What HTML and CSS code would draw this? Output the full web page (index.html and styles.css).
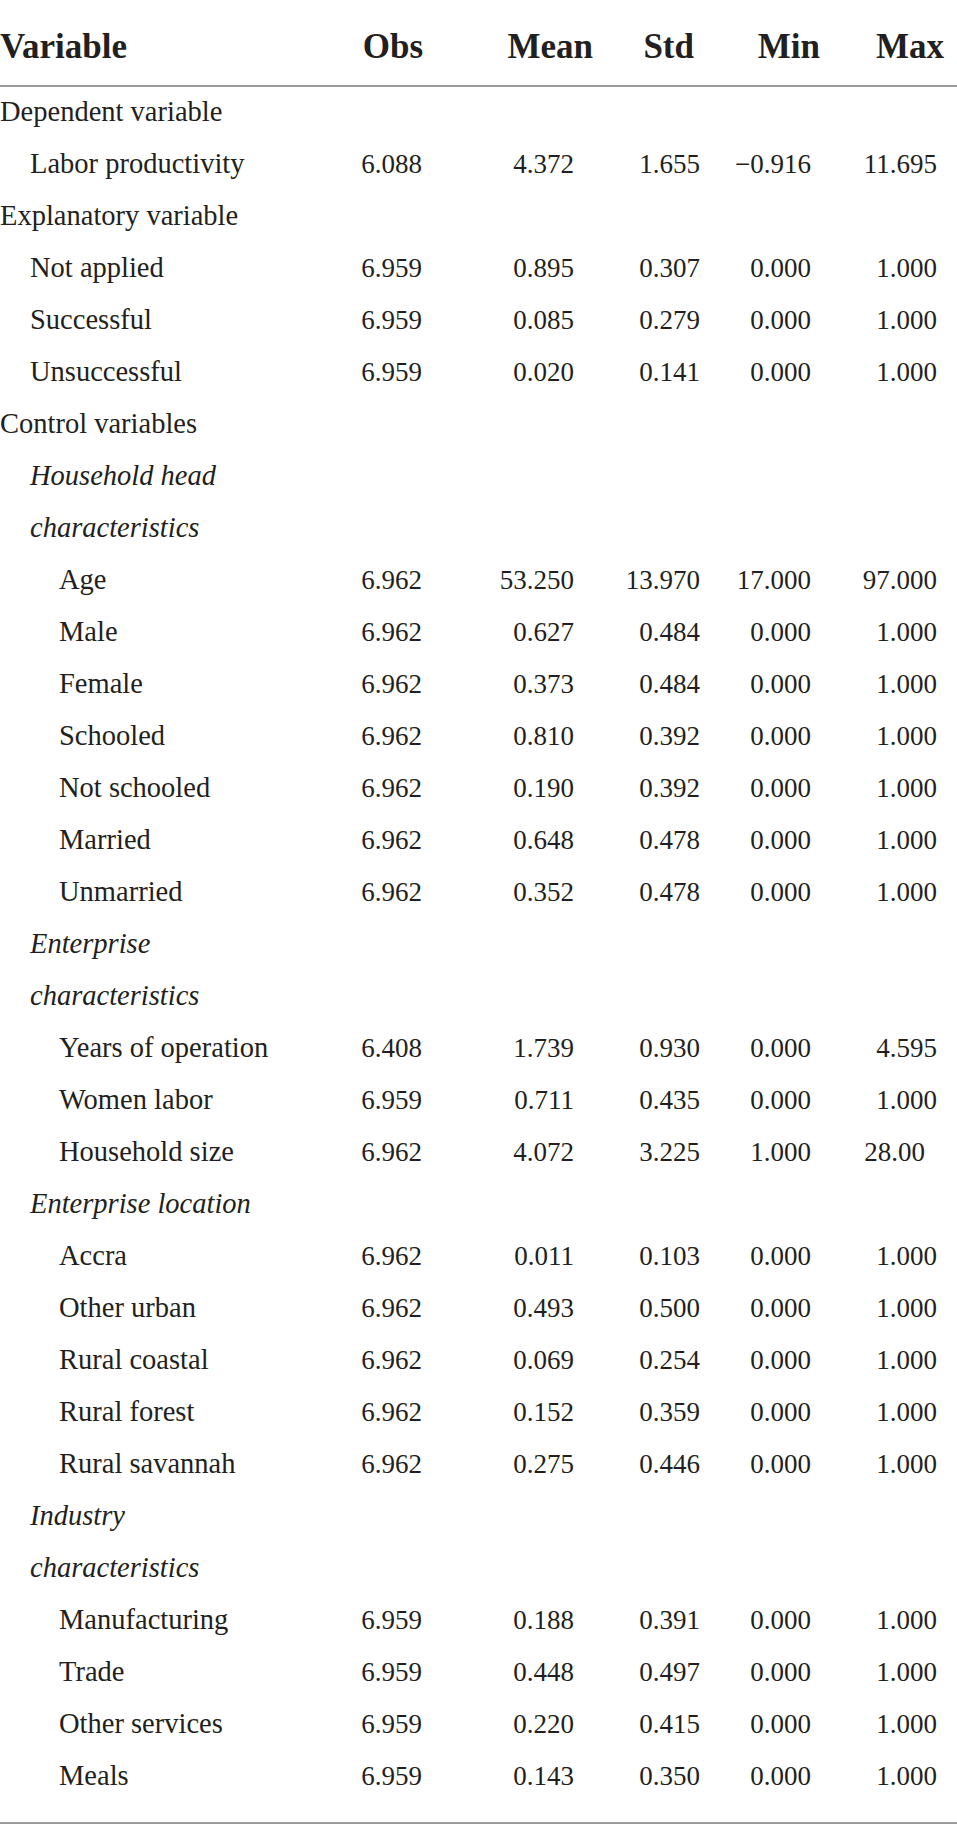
FILE: index.html
```html
<!DOCTYPE html>
<html lang="en">
<head>
<meta charset="utf-8">
<title>Descriptive statistics</title>
<link rel="stylesheet" href="styles.css">
</head>
<body>
<div class="table">
  <div class="row head">
    <div class="label">Variable</div>
    <div class="c obs">Obs</div>
    <div class="c mean">Mean</div>
    <div class="c std">Std</div>
    <div class="c min">Min</div>
    <div class="c max">Max</div>
  </div>
  <div class="body">
    <div class="row"><div class="label">Dependent variable</div></div>
    <div class="row"><div class="label l1">Labor productivity</div><div class="c obs">6.088</div><div class="c mean">4.372</div><div class="c std">1.655</div><div class="c min">&minus;0.916</div><div class="c max">11.695</div></div>
    <div class="row"><div class="label">Explanatory variable</div></div>
    <div class="row"><div class="label l1">Not applied</div><div class="c obs">6.959</div><div class="c mean">0.895</div><div class="c std">0.307</div><div class="c min">0.000</div><div class="c max">1.000</div></div>
    <div class="row"><div class="label l1">Successful</div><div class="c obs">6.959</div><div class="c mean">0.085</div><div class="c std">0.279</div><div class="c min">0.000</div><div class="c max">1.000</div></div>
    <div class="row"><div class="label l1">Unsuccessful</div><div class="c obs">6.959</div><div class="c mean">0.020</div><div class="c std">0.141</div><div class="c min">0.000</div><div class="c max">1.000</div></div>
    <div class="row"><div class="label">Control variables</div></div>
    <div class="row"><div class="label sub">Household head characteristics</div></div>
    <div class="row"><div class="label l2">Age</div><div class="c obs">6.962</div><div class="c mean">53.250</div><div class="c std">13.970</div><div class="c min">17.000</div><div class="c max">97.000</div></div>
    <div class="row"><div class="label l2">Male</div><div class="c obs">6.962</div><div class="c mean">0.627</div><div class="c std">0.484</div><div class="c min">0.000</div><div class="c max">1.000</div></div>
    <div class="row"><div class="label l2">Female</div><div class="c obs">6.962</div><div class="c mean">0.373</div><div class="c std">0.484</div><div class="c min">0.000</div><div class="c max">1.000</div></div>
    <div class="row"><div class="label l2">Schooled</div><div class="c obs">6.962</div><div class="c mean">0.810</div><div class="c std">0.392</div><div class="c min">0.000</div><div class="c max">1.000</div></div>
    <div class="row"><div class="label l2">Not schooled</div><div class="c obs">6.962</div><div class="c mean">0.190</div><div class="c std">0.392</div><div class="c min">0.000</div><div class="c max">1.000</div></div>
    <div class="row"><div class="label l2">Married</div><div class="c obs">6.962</div><div class="c mean">0.648</div><div class="c std">0.478</div><div class="c min">0.000</div><div class="c max">1.000</div></div>
    <div class="row"><div class="label l2">Unmarried</div><div class="c obs">6.962</div><div class="c mean">0.352</div><div class="c std">0.478</div><div class="c min">0.000</div><div class="c max">1.000</div></div>
    <div class="row"><div class="label sub">Enterprise characteristics</div></div>
    <div class="row"><div class="label l2">Years of operation</div><div class="c obs">6.408</div><div class="c mean">1.739</div><div class="c std">0.930</div><div class="c min">0.000</div><div class="c max">4.595</div></div>
    <div class="row"><div class="label l2">Women labor</div><div class="c obs">6.959</div><div class="c mean">0.711</div><div class="c std">0.435</div><div class="c min">0.000</div><div class="c max">1.000</div></div>
    <div class="row"><div class="label l2">Household size</div><div class="c obs">6.962</div><div class="c mean">4.072</div><div class="c std">3.225</div><div class="c min">1.000</div><div class="c max short">28.00</div></div>
    <div class="row"><div class="label sub">Enterprise location</div></div>
    <div class="row"><div class="label l2">Accra</div><div class="c obs">6.962</div><div class="c mean">0.011</div><div class="c std">0.103</div><div class="c min">0.000</div><div class="c max">1.000</div></div>
    <div class="row"><div class="label l2">Other urban</div><div class="c obs">6.962</div><div class="c mean">0.493</div><div class="c std">0.500</div><div class="c min">0.000</div><div class="c max">1.000</div></div>
    <div class="row"><div class="label l2">Rural coastal</div><div class="c obs">6.962</div><div class="c mean">0.069</div><div class="c std">0.254</div><div class="c min">0.000</div><div class="c max">1.000</div></div>
    <div class="row"><div class="label l2">Rural forest</div><div class="c obs">6.962</div><div class="c mean">0.152</div><div class="c std">0.359</div><div class="c min">0.000</div><div class="c max">1.000</div></div>
    <div class="row"><div class="label l2">Rural savannah</div><div class="c obs">6.962</div><div class="c mean">0.275</div><div class="c std">0.446</div><div class="c min">0.000</div><div class="c max">1.000</div></div>
    <div class="row"><div class="label sub">Industry characteristics</div></div>
    <div class="row"><div class="label l2">Manufacturing</div><div class="c obs">6.959</div><div class="c mean">0.188</div><div class="c std">0.391</div><div class="c min">0.000</div><div class="c max">1.000</div></div>
    <div class="row"><div class="label l2">Trade</div><div class="c obs">6.959</div><div class="c mean">0.448</div><div class="c std">0.497</div><div class="c min">0.000</div><div class="c max">1.000</div></div>
    <div class="row"><div class="label l2">Other services</div><div class="c obs">6.959</div><div class="c mean">0.220</div><div class="c std">0.415</div><div class="c min">0.000</div><div class="c max">1.000</div></div>
    <div class="row"><div class="label l2">Meals</div><div class="c obs">6.959</div><div class="c mean">0.143</div><div class="c std">0.350</div><div class="c min">0.000</div><div class="c max">1.000</div></div>
  </div>
</div>
</body>
</html>
```

FILE: styles.css
```css
html, body {
  margin: 0;
  padding: 0;
  background: #ffffff;
}

body {
  font-family: "Liberation Serif", "Times New Roman", serif;
  color: #231f20;
}

.table {
  width: 957px;
  border-bottom: 2px solid #9b9b9b;
}

.row {
  display: grid;
  grid-template-columns: 1fr 83px 171px 106px 120px 124px;
  padding-right: 13px;
  align-items: baseline;
}

.head {
  font-weight: bold;
  font-size: 35px;
  line-height: 40px;
  padding-top: 27px;
  padding-bottom: 18px;
  border-bottom: 2px solid #9b9b9b;
}

.body {
  margin-top: -1px;
  padding-bottom: 20px;
}

.body .row {
  line-height: 52px;
}

.body .label {
  font-size: 28.5px;
}

.label.l1 {
  padding-left: 30px;
}

.label.l2 {
  padding-left: 59px;
}

.label.sub {
  padding-left: 30px;
  font-style: italic;
  max-width: 270px;
  box-sizing: border-box;
}

.c {
  text-align: right;
  white-space: nowrap;
}

.body .c {
  font-size: 27px;
}

.body .obs { padding-right: 1px; }
.body .mean { padding-right: 20px; }
.body .std { padding-right: 0; }
.body .min { padding-right: 9px; }
.body .max { padding-right: 7px; }
.body .max.short { padding-right: 19px; }

.head .obs { padding-right: 0; }
.head .mean { padding-right: 1px; }
.head .std { padding-right: 6px; }
.head .min { padding-right: 0; }
.head .max { padding-right: 0; }
```
